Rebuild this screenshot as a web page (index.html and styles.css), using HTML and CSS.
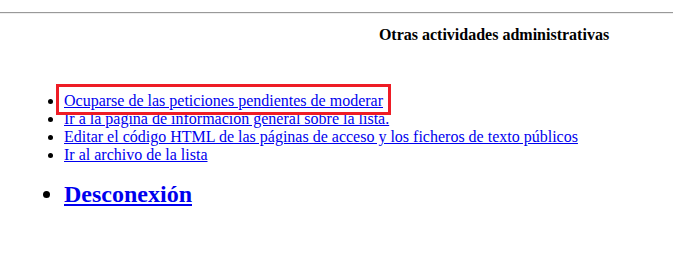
FILE: index.html
```html
<!DOCTYPE html>
<html lang="es">
<head>
  <meta charset="UTF-8" />
  <title>Administración de la lista</title>
  <link rel="stylesheet" href="styles.css">
</head>
<body>
  <hr class="top-rule">

  <div class="admin-row">
    <div class="admin-cell"></div>
    <div class="admin-cell">
      <h4>Otras actividades administrativas</h4>
    </div>
  </div>

  <ul class="admin-links">
    <li class="highlighted"><a href="#">Ocuparse de las peticiones pendientes de moderar</a></li>
    <li><a href="#">Ir a la página de información general sobre la lista.</a></li>
    <li><a href="#">Editar el código HTML de las páginas de acceso y los ficheros de texto públicos</a></li>
    <li><a href="#">Ir al archivo de la lista</a></li>
  </ul>

  <ul class="admin-links logout">
    <li><a href="#">Desconexión</a></li>
  </ul>
</body>
</html>
```

FILE: styles.css
```css
body {
  margin: 0;
  font-family: "Liberation Serif", "Times New Roman", serif;
  font-size: 16px;
  color: #000;
  background: #fff;
}
.top-rule {
  margin: 12px 0 0;
  border: none;
  border-top: 1px solid #999;
  border-bottom: 1px solid #eee;
}
.admin-row {
  display: grid;
  grid-template-columns: 1fr 1fr;
  padding: 0 17px 0 8px;
}
.admin-cell h4 {
  margin: 0;
  padding-top: 12px;
  text-align: center;
  font-size: 16px;
  font-weight: bold;
}
.admin-links {
  margin: 48px 0 0;
  padding-left: 64px;
}
.admin-links a {
  color: #0000ee;
}
.highlighted {
  position: relative;
}
.highlighted::after {
  content: '';
  position: absolute;
  left: -8px;
  top: -8px;
  width: 329px;
  height: 25px;
  border: 3px solid #ee1c25;
}
.logout {
  margin-top: 17px;
  font-size: 24px;
  font-weight: bold;
}
```
